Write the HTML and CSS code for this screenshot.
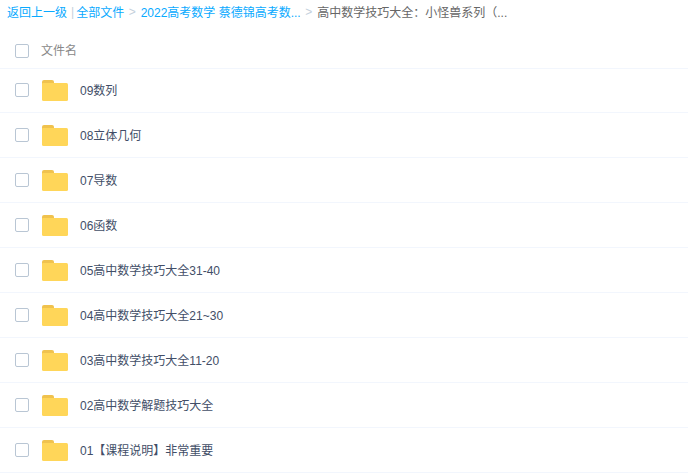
FILE: index.html
```html
<!DOCTYPE html>
<html lang="zh-CN">
<head>
<meta charset="utf-8">
<title>文件列表</title>
<link rel="stylesheet" href="styles.css">
</head>
<body>
<svg class="defs" width="0" height="0" aria-hidden="true">
  <symbol id="folder" viewBox="0 0 26 21">
    <path d="M0 2a2 2 0 0 1 2-2h8a2 2 0 0 1 2 2v2H0z" fill="#f0c24e"/>
    <path d="M0 4a1 1 0 0 1 1-1h23.500a1.500 1.500 0 0 1 1.500 1.500v15a1.500 1.500 0 0 1-1.500 1.500H1.500A1.500 1.500 0 0 1 0 19.500z" fill="#ffd659"/>
  </symbol>
</svg>
<nav class="crumbs">
  <a class="link">返回上一级</a><span class="bar">|</span><a class="link">全部文件</a><span class="sep">&gt;</span><a class="link">2022高考数学 蔡德锦高考数...</a><span class="sep">&gt;</span><span class="current">高中数学技巧大全：小怪兽系列（...</span>
</nav>
<div class="head"><span class="check"></span><span class="head-label">文件名</span></div>
<ul class="list">
  <li class="row"><span class="check"></span><svg class="icon"><use href="#folder"/></svg><span class="name">09数列</span></li>
  <li class="row"><span class="check"></span><svg class="icon"><use href="#folder"/></svg><span class="name">08立体几何</span></li>
  <li class="row"><span class="check"></span><svg class="icon"><use href="#folder"/></svg><span class="name">07导数</span></li>
  <li class="row"><span class="check"></span><svg class="icon"><use href="#folder"/></svg><span class="name">06函数</span></li>
  <li class="row"><span class="check"></span><svg class="icon"><use href="#folder"/></svg><span class="name">05高中数学技巧大全31-40</span></li>
  <li class="row"><span class="check"></span><svg class="icon"><use href="#folder"/></svg><span class="name">04高中数学技巧大全21~30</span></li>
  <li class="row"><span class="check"></span><svg class="icon"><use href="#folder"/></svg><span class="name">03高中数学技巧大全11-20</span></li>
  <li class="row"><span class="check"></span><svg class="icon"><use href="#folder"/></svg><span class="name">02高中数学解题技巧大全</span></li>
  <li class="row"><span class="check"></span><svg class="icon"><use href="#folder"/></svg><span class="name">01【课程说明】非常重要</span></li>
</ul>
</body>
</html>
```
FILE: styles.css
```css
* { box-sizing: border-box; }
html, body { margin: 0; padding: 0; background: #fff; overflow: hidden; }
body { font-family: "Liberation Sans", "Noto Sans CJK SC", sans-serif; font-size: 12px; color: #424e67; }
.defs { position: absolute; }
.crumbs { display: flex; align-items: center; height: 25px; padding: 0 0 2px 7px; white-space: nowrap; }
.link { color: #09aaff; }
.bar { color: #c4d0dc; margin: 0 2px 0 4px; }
.sep { color: #c4d0dc; margin: 0 5px 0 4.500px; }
.current { color: #666; }
.head { display: flex; align-items: center; height: 44px; padding: 9px 0 0 15px; border-bottom: 1px solid #f2f6fd; }
.head-label { color: #888; margin: 0 0 4px 12px; }
.list { list-style: none; margin: -1px 0 0; padding: 0; }
.row { display: flex; align-items: center; height: 45px; padding-left: 15px; border-bottom: 1px solid #f2f6fd; }
.check { width: 14px; height: 14px; border: 1px solid #b9c6d4; border-radius: 2px; background: #fff; flex: none; }
.icon { width: 26px; height: 21px; margin-left: 13px; flex: none; }
.name { margin: 0 0 2px 12px; }
```
